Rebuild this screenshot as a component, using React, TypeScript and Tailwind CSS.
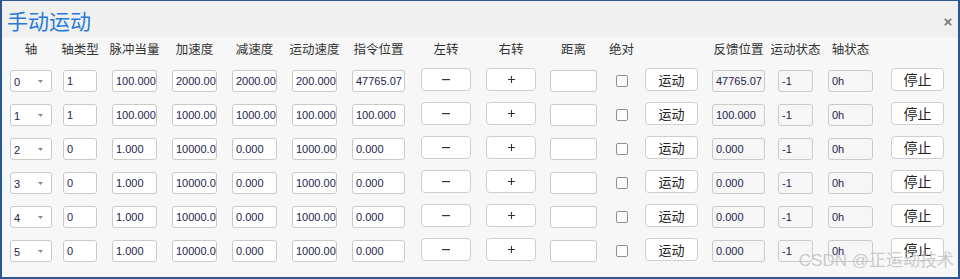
import React from "react";

const COLS =
  "grid grid-cols-[53px_49px_60px_60px_60px_60px_69px_65px_64px_66px_29px_67px_66px_50px_63px_1fr]";

const cjk = { fontFamily: '"Noto Sans CJK SC", "Noto Sans", sans-serif' };
const num = { fontFamily: '"Liberation Sans", Arial, sans-serif' };

type Row = {
  axis: string;
  type: string;
  pulse: string;
  acc: string;
  dec: string;
  speed: string;
  pos: string;
  fb: string;
};

const rows: Row[] = [
  { axis: "0", type: "1", pulse: "100.000", acc: "2000.000", dec: "2000.000", speed: "200.000", pos: "47765.07", fb: "47765.07" },
  { axis: "1", type: "1", pulse: "100.000", acc: "1000.000", dec: "1000.000", speed: "100.000", pos: "100.000", fb: "100.000" },
  { axis: "2", type: "0", pulse: "1.000", acc: "10000.000", dec: "0.000", speed: "1000.000", pos: "0.000", fb: "0.000" },
  { axis: "3", type: "0", pulse: "1.000", acc: "10000.000", dec: "0.000", speed: "1000.000", pos: "0.000", fb: "0.000" },
  { axis: "4", type: "0", pulse: "1.000", acc: "10000.000", dec: "0.000", speed: "1000.000", pos: "0.000", fb: "0.000" },
  { axis: "5", type: "0", pulse: "1.000", acc: "10000.000", dec: "0.000", speed: "1000.000", pos: "0.000", fb: "0.000" },
];

function Field({ w, v, gray }: { w: string; v: string; gray?: boolean }) {
  return (
    <div
      className={`${w} h-[22px] border border-[#cacaca] rounded-[3px] ${gray ? "bg-[#f6f6f6]" : "bg-white"} pl-[3px] overflow-hidden whitespace-nowrap text-[11px] leading-[20px] text-[#24244e]`}
      style={num}
    >
      {v}
    </div>
  );
}

function Btn({ w, children, cls }: { w: string; children: React.ReactNode; cls?: string }) {
  return (
    <div
      className={`${w} h-[23px] -mt-[2px] border border-[#cfcfcf] rounded-[4px] bg-white flex items-center justify-center text-[#222] ${cls ?? ""}`}
    >
      {children}
    </div>
  );
}

function Header({ w, t }: { w: string; t?: string }) {
  return (
    <div className={`${w} flex justify-center whitespace-nowrap text-[12.5px] leading-[24px] text-[#333]`} style={cjk}>
      {t ?? ""}
    </div>
  );
}

export default function App() {
  return (
    <div className="relative w-[960px] h-[279px] border-t border-x-2 border-b-2 border-[#2b579a] flex flex-col overflow-hidden">
      <div className="h-[36px] bg-[#f0f0f0] flex items-center justify-between pl-[5px] pr-[6px]">
        <div className="text-[21px] leading-[28px] text-[#2779d9] pt-[2px]" style={cjk}>
          手动运动
        </div>
        <svg width="8" height="8" viewBox="0 0 8 8" className="mt-[5px]">
          <path d="M0.8 0.8 L7.2 7.2 M7.2 0.8 L0.8 7.2" stroke="#7a7a7a" strokeWidth="1.8" />
        </svg>
      </div>
      <div className="flex-1 bg-[#f7f7f7] pl-[8px]">
        <div className={`${COLS} h-[22px]`}>
          <Header w="w-[42px]" t="轴" />
          <Header w="w-[34px]" t="轴类型" />
          <Header w="w-[45px]" t="脉冲当量" />
          <Header w="w-[45px]" t="加速度" />
          <Header w="w-[45px]" t="减速度" />
          <Header w="w-[45px]" t="运动速度" />
          <Header w="w-[53px]" t="指令位置" />
          <Header w="w-[50px]" t="左转" />
          <Header w="w-[50px]" t="右转" />
          <Header w="w-[47px]" t="距离" />
          <Header w="w-[11px]" t="绝对" />
          <Header w="w-[53px]" />
          <Header w="w-[53px]" t="反馈位置" />
          <Header w="w-[35px]" t="运动状态" />
          <Header w="w-[45px]" t="轴状态" />
          <Header w="w-[53px]" />
        </div>
        <div className="mt-[11px] flex flex-col gap-[12px]">
          {rows.map((r) => (
            <div key={r.axis} className={`${COLS} h-[22px] items-start`}>
              <div
                className="w-[42px] h-[22px] border border-[#cacaca] rounded-[3px] bg-white flex items-center justify-between pl-[3px] pr-[8px] text-[11px] text-[#24244e]"
                style={num}
              >
                <span className="pt-[2px]">{r.axis}</span>
                <svg width="5" height="3" viewBox="0 0 5 3">
                  <path d="M0 0 L5 0 L2.5 3 Z" fill="#8a8a8a" />
                </svg>
              </div>
              <Field w="w-[34px]" v={r.type} />
              <Field w="w-[45px]" v={r.pulse} />
              <Field w="w-[45px]" v={r.acc} />
              <Field w="w-[45px]" v={r.dec} />
              <Field w="w-[45px]" v={r.speed} />
              <Field w="w-[53px]" v={r.pos} />
              <Btn w="w-[50px]">
                <svg width="8" height="2" viewBox="0 0 8 2">
                  <rect x="0" y="0" width="8" height="1.2" fill="#333" />
                </svg>
              </Btn>
              <Btn w="w-[50px]">
                <svg width="7" height="7" viewBox="0 0 7 7">
                  <path d="M3.5 0 V7 M0 3.5 H7" stroke="#333" strokeWidth="1.1" />
                </svg>
              </Btn>
              <Field w="w-[47px]" v="" />
              <div className="w-[12px] h-[12px] mt-[5px] border border-[#8f8f8f] rounded-[2px] bg-white" />
              <Btn w="w-[53px]" cls="text-[13px]">
                <span style={cjk}>运动</span>
              </Btn>
              <Field w="w-[53px]" v={r.fb} gray />
              <Field w="w-[35px]" v="-1" gray />
              <Field w="w-[45px]" v="0h" gray />
              <Btn w="w-[53px]" cls="text-[14px]">
                <span style={cjk}>停止</span>
              </Btn>
            </div>
          ))}
        </div>
      </div>
      <div
        className="absolute right-[4px] bottom-[6px] text-[17px] leading-[20px] text-[#bdbdbd] opacity-75 whitespace-nowrap"
        style={{ fontFamily: '"Liberation Sans", "Noto Sans CJK SC", sans-serif' }}
      >
        CSDN @正运动技术
      </div>
    </div>
  );
}
